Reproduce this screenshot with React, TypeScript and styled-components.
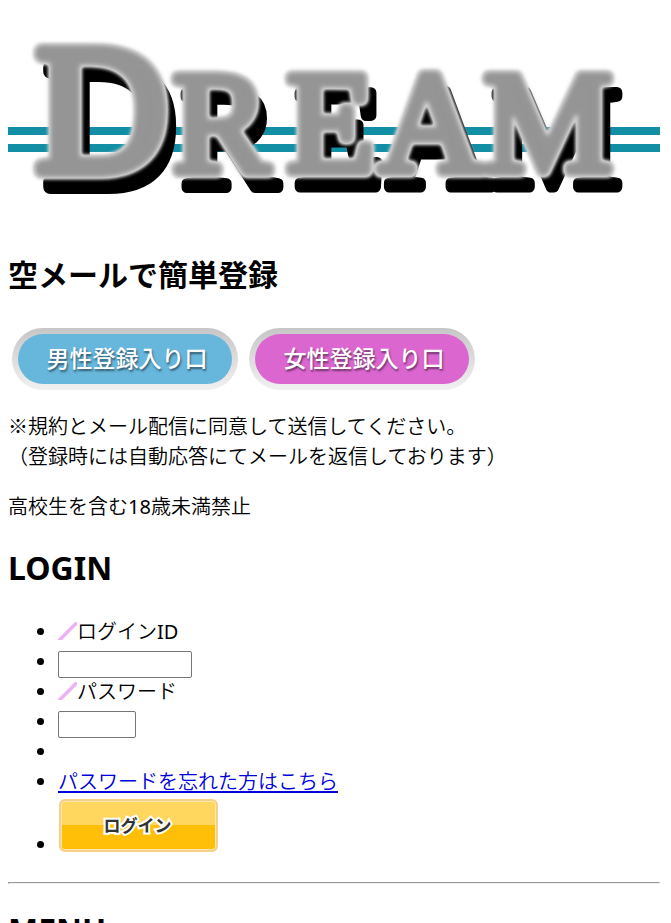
import React from "react";
import styled, { createGlobalStyle } from "styled-components";

const GlobalStyle = createGlobalStyle`
  body {
    margin: 8px 11px 0 8px;
    background: #fff;
    color: #000;
    font-family: "Noto Sans", "Noto Sans CJK JP", sans-serif;
    font-size: 20px;
    font-weight: 350;
    line-height: 30px;
  }
`;

const Page = styled.main`
  display: flow-root;
`;

const Logo = styled.h1`
  margin: 0;

  svg {
    display: block;
    width: 100%;
    height: auto;
    overflow: visible;
  }
`;

const LogoLetters = styled.text`
  font-family: "Liberation Serif", serif;
  font-weight: 400;
  fill: #959595;
  stroke: #959595;
  stroke-linejoin: round;
`;

const Heading = styled.h2<{ $latin?: boolean }>`
  margin: ${(p) => (p.$latin ? "23px 0 27px" : "25px 0")};
  font-size: ${(p) => (p.$latin ? 32 : 30)}px;
  font-weight: 700;
  line-height: 45px;
`;

const Entrances = styled.div`
  display: flex;
  flex-wrap: wrap;
  gap: 11px;
  margin: 0 0 20px;
  padding: 6px 4px 2px;
`;

const Entrance = styled.a<{ $color: string }>`
  box-sizing: border-box;
  display: flex;
  width: 226px;
  height: 62px;
  padding: 6px;
  border-radius: 31px;
  background: linear-gradient(#c6c6c6, #dcdcdc 50%, #f1f1f1);
  text-decoration: none;

  span {
    flex: 1;
    padding-left: 4px;
    border-radius: 25px;
    background: ${(p) => p.$color};
    color: #fff;
    font-size: 23px;
    font-weight: 500;
    line-height: 48px;
    text-align: center;
    text-shadow: 1px 2px 2px rgba(0, 0, 0, 0.5);
  }
`;

const Paragraph = styled.p`
  margin: 20px 0;
`;

const Mark = styled.span`
  font-family: "Noto Sans CJK JP", sans-serif;
  line-height: 0;
`;

const Latin = styled.span`
  font-weight: 400;
`;

const Fields = styled.ul`
  margin: 20px 0;
  padding-left: 50px;
`;

const Row = styled.li`
  height: 30px;
`;

const ButtonRow = styled.li`
  padding: 2px 0;
`;

const Slash = styled.svg`
  width: 19px;
  height: 19px;
  vertical-align: -2px;
`;

const Field = styled.input<{ $width: number }>`
  box-sizing: border-box;
  width: ${(p) => p.$width}px;
  height: 27px;
  margin: 4px 0 0;
  padding: 1px 2px;
  border: 1px solid #767676;
  border-radius: 2px;
  background: #fff;
  font: inherit;
  font-size: 16px;
  line-height: 20px;
  vertical-align: top;
`;

const Link = styled.a`
  color: #0000dd;
  text-decoration: underline;
  text-decoration-thickness: 2px;
  text-decoration-skip-ink: none;
  text-underline-offset: 2px;
`;

const ButtonFrame = styled.span`
  display: inline-block;
  overflow: hidden;
  padding-left: 1px;
`;

const LoginButton = styled.button`
  display: block;
  width: 159px;
  height: 53px;
  padding: 0 2px 0 0;
  border: 2px solid #f8cf86;
  border-radius: 6px;
  background: linear-gradient(#ffd65e 50%, #ffbf09 50%);
  box-shadow: inset 0 0 0 1px #ffe9b0;
  color: #333;
  font-family: inherit;
  font-size: 17px;
  font-weight: 700;
  line-height: 49px;
  -webkit-text-stroke: 4px #fff;
  paint-order: stroke fill;
`;

const Rule = styled.hr`
  margin: 20px 0 23px;
`;

function DreamLogo() {
  return (
    <svg viewBox="0 0 652 219" role="img" aria-label="DREAM">
      <defs>
        <filter
          id="emboss"
          filterUnits="userSpaceOnUse"
          x="0"
          y="0"
          width="652"
          height="219"
          colorInterpolationFilters="sRGB"
        >
          <feOffset in="SourceAlpha" dx="9" dy="16" result="shadow" />
          <feGaussianBlur in="SourceAlpha" stdDeviation="2" />
          <feComponentTransfer result="halo">
            <feFuncA type="linear" slope="2" />
          </feComponentTransfer>
          <feFlood floodColor="#dedede" />
          <feComposite in2="halo" operator="in" result="edge" />
          <feMorphology in="SourceGraphic" operator="erode" radius="1" />
          <feGaussianBlur stdDeviation="2" result="face" />
          <feMerge>
            <feMergeNode in="shadow" />
            <feMergeNode in="edge" />
            <feMergeNode in="face" />
          </feMerge>
        </filter>
      </defs>
      <path d="M0 119h652v8H0zM0 136h652v8H0z" fill="#128fa4" />
      <LogoLetters filter="url(#emboss)">
        <tspan x="28" y="163" fontSize="182" strokeWidth="14">D</tspan>
        <tspan x="165 279 371 476" y="163" fontSize="144" strokeWidth="11">REAM</tspan>
      </LogoLetters>
    </svg>
  );
}

function SlashIcon() {
  return (
    <Slash viewBox="0 0 19 19" aria-hidden="true">
      <path d="M0 17 17 0h2v3L4 18H0z" fill="#efb0f6" />
    </Slash>
  );
}

export default function App() {
  return (
    <>
      <GlobalStyle />
      <Page>
        <Logo>
          <DreamLogo />
        </Logo>
        <Heading>空メールで簡単登録</Heading>
        <Entrances>
          <Entrance href="#men" $color="#67b6dc">
            <span>男性登録入り口</span>
          </Entrance>
          <Entrance href="#women" $color="#dc66d0">
            <span>女性登録入り口</span>
          </Entrance>
        </Entrances>
        <Paragraph>
          <Mark>※</Mark>規約とメール配信に同意して送信してください。
          <br />
          （登録時には自動応答にてメールを返信しております）
        </Paragraph>
        <Paragraph>
          高校生を含む<Latin>18</Latin>歳未満禁止
        </Paragraph>
        <Heading $latin>LOGIN</Heading>
        <form onSubmit={(e) => e.preventDefault()}>
          <Fields>
            <Row>
              <SlashIcon />
              <label htmlFor="login-id">
                ログイン<Latin>ID</Latin>
              </label>
            </Row>
            <Row>
              <Field id="login-id" type="text" $width={134} />
            </Row>
            <Row>
              <SlashIcon />
              <label htmlFor="password">パスワード</label>
            </Row>
            <Row>
              <Field id="password" type="password" $width={78} />
            </Row>
            <Row />
            <Row>
              <Link href="#forgot">パスワードを忘れた方はこちら</Link>
            </Row>
            <ButtonRow>
              <ButtonFrame>
                <LoginButton type="submit">ログイン</LoginButton>
              </ButtonFrame>
            </ButtonRow>
          </Fields>
        </form>
        <Rule />
        <Heading $latin>MENU</Heading>
      </Page>
    </>
  );
}
